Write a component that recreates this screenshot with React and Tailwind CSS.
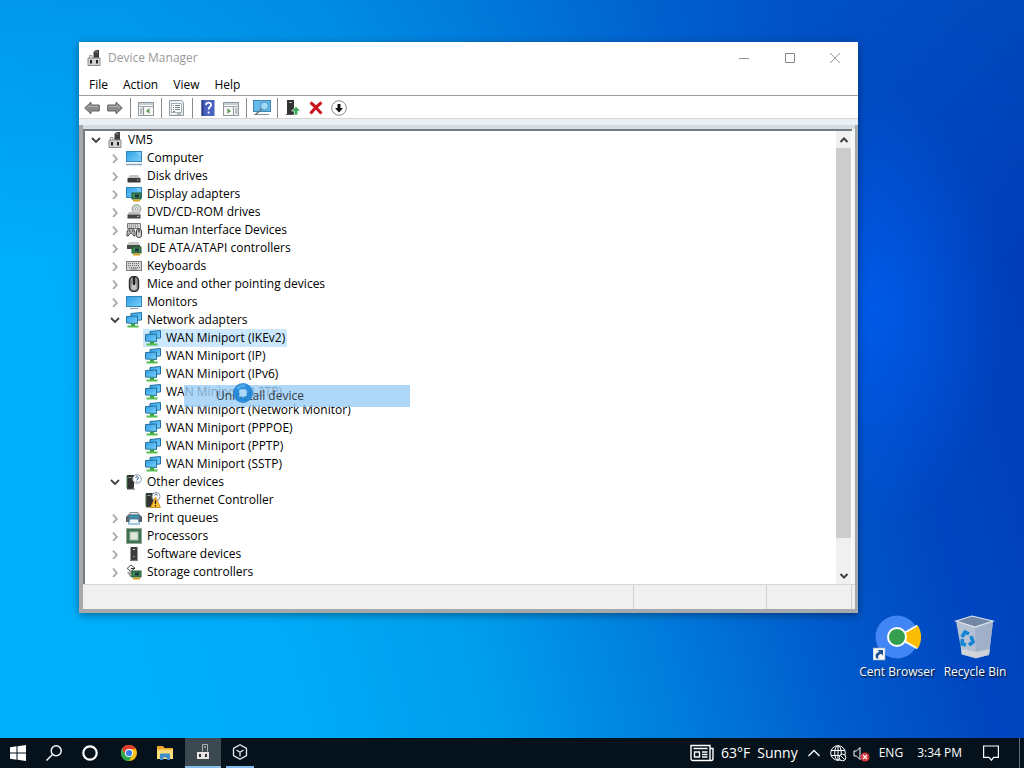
import React, { useState } from 'react';

/* ---------- small 16px device icons ---------- */

const Svg = ({ children, className = 'size-4', box = '0 0 16 16' }) => (
    <svg viewBox={box} className={`${className} shrink-0`} fill="none" aria-hidden="true">
        {children}
    </svg>
);

const PcIcon = ({ className }) => (
    <Svg className={className}>
        <path d="M9 .5l4-1V8H7.500V2z" fill="#3d3d3d" />
        <path d="M9 2h3" stroke="#8a8a8a" />
        <path d="M6 8V5.500H3.500V8" stroke="#999" />
        <path d="M2 8h12v7.500H2z" fill="#d2d2d2" stroke="#8c8c8c" />
        <rect x="4" y="10" width="2" height="3.500" fill="#222" />
        <rect x="10" y="10" width="2" height="3.500" fill="#222" />
    </Svg>
);

const Screen = () => (
    <>
        <rect x=".5" y="1.500" width="15" height="10" fill="url(#screen)" stroke="#3187bb" />
        <path d="M9 2h6v5z" fill="#8fd3fb" opacity=".6" />
    </>
);

const ComputerIcon = () => (
    <Svg>
        <Screen />
        <path d="M0 14.500h16" stroke="#8aa4bb" strokeWidth="1.500" />
    </Svg>
);

const MonitorIcon = () => (
    <Svg>
        <rect x=".5" y="2.500" width="15" height="10" fill="url(#screen)" stroke="#3187bb" />
        <path d="M4 14.500h8" stroke="#8a9cab" />
    </Svg>
);

const DiskIcon = () => (
    <Svg>
        <path d="M4 7h8l2 3H2z" fill="#c4c4c4" />
        <rect x="1.500" y="10" width="13" height="4.500" fill="#3a3a3a" />
        <rect x="11" y="11.500" width="1.500" height="1" fill="#8edb8e" />
    </Svg>
);

const Card = () => (
    <>
        <rect x="6" y="7" width="9" height="6" fill="#3d8a50" stroke="#1d5a30" />
        <rect x="9" y="8.500" width="4" height="3" fill="#223344" />
        <path d="M7 14.500h7" stroke="#d9a520" strokeWidth="2" />
    </>
);

const DisplayIcon = () => (
    <Svg>
        <Screen />
        <Card />
    </Svg>
);

const DvdIcon = () => (
    <Svg>
        <circle cx="10.500" cy="5" r="4.400" fill="#d3dad5" stroke="#8f9791" />
        <circle cx="10.500" cy="5" r="1.300" fill="#fff" stroke="#8f9791" strokeWidth=".7" />
        <path d="M3 8h10l1.500 2.500h-13z" fill="#bcbcbc" />
        <rect x="1.500" y="10.500" width="13" height="4" fill="#454545" />
        <rect x="11" y="12" width="2" height="1" fill="#aaa" />
    </Svg>
);

const HidIcon = () => (
    <Svg>
        <path d="M1.500 1.500h13v5h-13z" fill="#d8d8d8" stroke="#777" />
        <path d="M3 3h10M3 5h10" stroke="#666" strokeDasharray="1 1" />
        <path d="M1 14c-.5-6 1.500-7.500 4-7.500s4.500 1 4 7.500c-2 1-2-3-4-3s-2 4-4 3z" fill="#b5b5b5" stroke="#4c4c4c" />
        <path d="M3 9h1.500M6 9h1.500" stroke="#333" />
        <rect x="10.500" y="7" width="5" height="8.500" rx="2" fill="#ccc" stroke="#444" />
        <path d="M13 7.500v3" stroke="#333" strokeWidth="1.300" />
    </Svg>
);

const IdeIcon = () => (
    <Svg>
        <path d="M3 2h9l2 3H1z" fill="#c8c8c8" />
        <rect x="1" y="5" width="13" height="4" fill="#4b4b4b" />
        <Card />
    </Svg>
);

const KeyboardIcon = () => (
    <Svg>
        <rect x=".5" y="3.500" width="15" height="9" fill="#d6d6d6" stroke="#7a7a7a" />
        <path d="M2 5.500h12M2 7.500h12" stroke="#6c6c6c" strokeDasharray="1 1" />
        <path d="M2 9.500h12" stroke="#6c6c6c" strokeDasharray="1 1" strokeDashoffset="1" />
        <path d="M4.500 11h7" stroke="#777" />
    </Svg>
);

const MouseIcon = () => (
    <Svg>
        <rect x="3.500" y=".5" width="9" height="15" rx="4" fill="#8d8d8d" stroke="#2e2e2e" strokeWidth="1.400" />
        <path d="M5.500 8v3q0 3 2.500 3t2.500-3V8z" fill="#c4c4c4" />
        <path d="M8 1v8" stroke="#222" strokeWidth="2" />
    </Svg>
);

const NetworkIcon = () => (
    <Svg>
        <path d="M5 1.500l10.500-1v7.500l-10.500.5z" fill="url(#screen)" stroke="#23719f" />
        <path d="M.5 4.500l11-.5v7.500l-11-.5z" fill="url(#screen)" stroke="#23719f" />
        <path d="M7 11.500v3" stroke="#35a048" strokeWidth="4" />
        <path d="M1.500 14.500h11" stroke="#56bd4f" strokeWidth="2" />
    </Svg>
);

const Tower = () => (
    <>
        <path d="M1 1h7v12l-1 2H1z" fill="#333" />
        <path d="M2.500 3.500h3" stroke="#8f9f8f" />
        <path d="M1 15h8" stroke="#555" />
        <path d="M1 2v12" stroke="#477a4c" />
    </>
);

const OtherIcon = () => (
    <Svg>
        <Tower />
        <circle cx="11" cy="5" r="4.300" fill="#fff" stroke="#8997a4" />
        <path d="M9.700 4c0-2 2.800-1.800 2.600 0-.1 1-1.300 1-1.300 2.200M11 7v.9" stroke="#2b5c94" />
    </Svg>
);

const WarnIcon = () => (
    <Svg>
        <Tower />
        <circle cx="11" cy="4.500" r="4" fill="#fff" stroke="#8997a4" />
        <path d="M9.800 3.500c0-1.800 2.500-1.600 2.400 0" stroke="#2b5c94" />
        <path d="M10.500 5l5 10.500h-10z" fill="#fbc02d" stroke="#c98012" strokeWidth=".8" />
        <path d="M10.500 8.200v3.800M10.500 13v1.500" stroke="#222" strokeWidth="1.300" />
    </Svg>
);

const PrinterIcon = () => (
    <Svg>
        <path d="M4 2.500h8l1 3H3z" fill="#dfe6ea" stroke="#7f8f98" />
        <path d="M.5 7l2-2h11l2 2v4.500H.5z" fill="#5b6a73" stroke="#46535b" />
        <path d="M3 5.500h10v2H3z" fill="#2f9fc0" />
        <path d="M4 9h8l1.500 5h-11z" fill="#f4f8fb" stroke="#5594c0" />
    </Svg>
);

const CpuIcon = () => (
    <Svg>
        <rect x="1" y="1" width="14" height="14" fill="#3f7350" />
        <rect x=".5" y=".5" width="15" height="15" stroke="#27543a" strokeDasharray="1 1" />
        <rect x="4" y="4" width="8" height="8" fill="#dfeadf" stroke="#9fc0a4" />
    </Svg>
);

const SoftwareIcon = () => (
    <Svg>
        <path d="M4.500 1h7v13h-7z" fill="#3c3c3c" />
        <path d="M7 3.500h2" stroke="#ddd" />
        <path d="M7 10.500h2" stroke="#999" />
        <path d="M4 14.500h8" stroke="#777" />
    </Svg>
);

const StorageIcon = () => (
    <Svg>
        <path d="M5 1l4 3-4 3.500L1 4.500z" fill="#eee" stroke="#555" />
        <path d="M1 8l3 5h4V7z" fill="#a5a5a5" />
        <path d="M5 4.500h4" stroke="#333" />
        <Card />
    </Svg>
);

/* ---------- toolbar icons ---------- */

const ArrowIcon = ({ flip }) => (
    <svg viewBox="0 0 16 14" className={flip ? 'h-[14px] w-4 -scale-x-100' : 'h-[14px] w-4'} aria-hidden="true">
        <path d="M.7 7L7 1v3h8.300v6H7v3z" fill="#8b8b8b" stroke="#666" />
        <path d="M3 7l3-2.700V5.500h8" fill="none" stroke="#b4b4b4" />
    </svg>
);

const PaneIcon = ({ right }) => (
    <Svg>
        <rect x=".5" y="2.500" width="15" height="13" fill="#f6f7f5" stroke="#8c969c" />
        <path d="M1 4h14M1 6.500h14" stroke="#9ca7ae" />
        <path d={right ? 'M10.500 7v9' : 'M5.500 7v9'} stroke="#8c969c" />
        <path d={right ? 'M12 9h2.500M12 11h2.500M12 13h2.500' : 'M2 9h2.500M2 11h2.500M2 13h2.500'} stroke="#77858f" />
        <path d={right ? 'M4.500 8.200l3.500 2.800-3.500 2.800z' : 'M11.500 8.200L8 11l3.500 2.800z'} fill="#5b9a50" />
    </Svg>
);

const PropsIcon = () => (
    <Svg>
        <path d="M.5.5h12l2 2v13H.5z" fill="#eef1f2" stroke="#8f989e" />
        <rect x="2.500" y="3.500" width="10" height="9" fill="#fff" stroke="#a9b2b8" />
        <path d="M4 5.500h1M6 5.500h5M4 7.500h1M6 7.500h5M4 9.500h1M6 9.500h5M4 11.500h2M8 14h4" stroke="#71808a" />
    </Svg>
);

const HelpIcon = () => (
    <Svg>
        <rect x="1.500" y="0" width="13" height="16" fill="#4a61bd" />
        <path d="M2.500 0v16" stroke="#2b3c8c" strokeWidth="2" />
        <path d="M6 5c0-3.500 5.500-3 5 0-.3 2-2.400 2-2.400 4.500M8.600 11.500v2" stroke="#fff" strokeWidth="1.800" />
    </Svg>
);

const ScanIcon = () => (
    <svg viewBox="0 0 18 16" className="h-4 w-[18px]" fill="none" aria-hidden="true">
        <rect x=".5" y=".5" width="17" height="11" fill="#63b9e8" stroke="#3a85b5" />
        <path d="M1 14.500h15" stroke="#8395a0" />
        <circle cx="11.500" cy="6" r="4" fill="#9fd8f5" stroke="#4b95bf" />
        <path d="M8.500 9l-6 5.500" stroke="#60747f" strokeWidth="1.600" />
    </svg>
);

const UpdateIcon = () => (
    <Svg>
        <path d="M2 0h7v14H2z" fill="#333" />
        <path d="M4 2.500h3" stroke="#b5b5b5" />
        <path d="M1 14.500h10" stroke="#555" />
        <path d="M11 6.500l4.500 4.500h-2.800v4H9.300v-4H6.500z" fill="#3aa655" stroke="#fff" strokeWidth=".6" />
    </Svg>
);

const DeleteIcon = () => (
    <Svg>
        <path d="M2.500 2.500c4 3 7 7 11 11M13.500 2.500c-4 3-8 7-11 11" stroke="#c8141e" strokeWidth="3" />
    </Svg>
);

const DisableIcon = () => (
    <Svg>
        <circle cx="8" cy="8" r="7.300" fill="#fff" stroke="#888" />
        <path d="M6.500 4h3v4H12l-4 4.500L4 8h2.500z" fill="#111" />
    </Svg>
);

const Separator = () => <span className="mr-[3px] ml-1 h-5 w-px bg-[#8c8c8c]" />;

const Chevron = ({ open }) =>
    open ? (
        <svg viewBox="0 0 10 10" className="size-[10px]" fill="none" aria-hidden="true">
            <path d="M1 3l4 4 4-4" stroke="#404040" strokeWidth="1.800" />
        </svg>
    ) : (
        <svg viewBox="0 0 10 10" className="size-[10px]" fill="none" aria-hidden="true">
            <path d="M3 1.500L6.800 6 3 10" stroke="#a6a6a6" strokeWidth="1.800" />
        </svg>
    );

/* ---------- data ---------- */

const miniports = ['IKEv2', 'IP', 'IPv6', 'L2TP', 'Network Monitor', 'PPPOE', 'PPTP', 'SSTP'];

const categories = [
    { name: 'Computer', icon: ComputerIcon },
    { name: 'Disk drives', icon: DiskIcon },
    { name: 'Display adapters', icon: DisplayIcon },
    { name: 'DVD/CD-ROM drives', icon: DvdIcon },
    { name: 'Human Interface Devices', icon: HidIcon },
    { name: 'IDE ATA/ATAPI controllers', icon: IdeIcon },
    { name: 'Keyboards', icon: KeyboardIcon },
    { name: 'Mice and other pointing devices', icon: MouseIcon },
    { name: 'Monitors', icon: MonitorIcon },
    {
        name: 'Network adapters',
        icon: NetworkIcon,
        children: miniports.map((m) => ({ name: `WAN Miniport (${m})`, icon: NetworkIcon })),
    },
    { name: 'Other devices', icon: OtherIcon, children: [{ name: 'Ethernet Controller', icon: WarnIcon }] },
    { name: 'Print queues', icon: PrinterIcon },
    { name: 'Processors', icon: CpuIcon },
    { name: 'Software devices', icon: SoftwareIcon },
    { name: 'Storage controllers', icon: StorageIcon },
];

const TreeRow = ({ item, open, onToggle, selected, onSelect }) => {
    const Icon = item.icon;
    return (
        <div className="flex h-[18px] items-center">
            {onToggle ? (
                <button onClick={onToggle} aria-label={`Toggle ${item.name}`} className="flex w-[19px] justify-center">
                    <Chevron open={open} />
                </button>
            ) : (
                <span className="w-[19px]" />
            )}
            <button
                onClick={onSelect}
                className={`flex h-[18px] items-center gap-[5px] px-[2px] whitespace-nowrap ${selected ? 'bg-[#cce8ff]' : ''}`}
            >
                <Icon />
                <span>{item.name}</span>
            </button>
        </div>
    );
};

const DeviceTree = () => {
    const [open, setOpen] = useState({ root: true, 'Network adapters': true, 'Other devices': true });
    const [selected, setSelected] = useState('WAN Miniport (IKEv2)');
    const toggle = (name) => setOpen({ ...open, [name]: !open[name] });

    return (
        <div className="min-w-0 flex-1 overflow-hidden pl-px">
            <TreeRow
                item={{ name: 'VM5', icon: PcIcon }}
                open={open.root}
                onToggle={() => toggle('root')}
                selected={selected === 'VM5'}
                onSelect={() => setSelected('VM5')}
            />
            {open.root && (
                <ul className="pl-[19px]">
                    {categories.map((cat) => (
                        <li key={cat.name}>
                            <TreeRow
                                item={cat}
                                open={open[cat.name]}
                                onToggle={() => toggle(cat.name)}
                                selected={selected === cat.name}
                                onSelect={() => setSelected(cat.name)}
                            />
                            {cat.children && open[cat.name] && (
                                <ul className="pl-[19px]">
                                    {cat.children.map((dev) => (
                                        <li key={dev.name}>
                                            <TreeRow
                                                item={dev}
                                                selected={selected === dev.name}
                                                onSelect={() => setSelected(dev.name)}
                                            />
                                        </li>
                                    ))}
                                </ul>
                            )}
                        </li>
                    ))}
                </ul>
            )}
        </div>
    );
};

const ScrollBar = () => (
    <div className="mr-px flex w-[15px] flex-col bg-[#f0f0f0]">
        <button aria-label="Scroll up" className="flex h-[17px] items-center justify-center">
            <svg viewBox="0 0 10 10" className="size-[10px]" fill="none" aria-hidden="true">
                <path d="M1.500 7L5 3.500 8.500 7" stroke="#404040" strokeWidth="2" />
            </svg>
        </button>
        <div className="flex-1">
            <div className="h-[93%] bg-[#cdcdcd]" />
        </div>
        <button aria-label="Scroll down" className="flex h-[17px] items-center justify-center">
            <svg viewBox="0 0 10 10" className="size-[10px]" fill="none" aria-hidden="true">
                <path d="M1.500 3L5 6.500 8.500 3" stroke="#404040" strokeWidth="2" />
            </svg>
        </button>
    </div>
);

const ToolButton = ({ label, children }) => (
    <button aria-label={label} title={label} className="flex h-5 w-[23px] items-center justify-center">
        {children}
    </button>
);

const DeviceManager = () => (
    <section className="absolute top-[42px] right-[166px] bottom-[125px] left-[79px] flex flex-col bg-white shadow-[0_2px_8px_rgba(0,0,0,0.4)]">
        <header className="flex h-8 items-center pl-[7px] text-[#999]">
            <PcIcon />
            <h1 className="ml-[6px] flex-1">Device Manager</h1>
            <button aria-label="Minimize" className="flex h-8 w-[46px] items-center justify-center">
                <svg viewBox="0 0 10 10" className="size-[10px]" aria-hidden="true">
                    <path d="M0 5.500h10" stroke="#999" />
                </svg>
            </button>
            <button aria-label="Maximize" className="flex h-8 w-[45px] items-center justify-center">
                <svg viewBox="0 0 10 10" className="size-[10px]" fill="none" aria-hidden="true">
                    <path d="M.5.5h9v9h-9z" stroke="#888" />
                </svg>
            </button>
            <button aria-label="Close" className="flex h-8 w-[46px] items-center justify-center">
                <svg viewBox="0 0 10 10" className="size-[10px]" aria-hidden="true">
                    <path d="M0 0l10 10M10 0L0 10" stroke="#999" />
                </svg>
            </button>
        </header>

        <nav className="flex h-[22px] items-center gap-[15px] border-b border-[#a0a0a0] pl-[10px]">
            <button>File</button>
            <button>Action</button>
            <button>View</button>
            <button>Help</button>
        </nav>

        <div className="flex h-[23px] items-center border-b border-[#d5d5d5] pt-[2px] pl-px">
            <ToolButton label="Back"><ArrowIcon /></ToolButton>
            <ToolButton label="Forward"><ArrowIcon flip /></ToolButton>
            <Separator />
            <ToolButton label="Show/Hide Console Tree"><PaneIcon /></ToolButton>
            <Separator />
            <ToolButton label="Properties"><PropsIcon /></ToolButton>
            <Separator />
            <ToolButton label="Help"><HelpIcon /></ToolButton>
            <ToolButton label="Show/Hide Action Pane"><PaneIcon right /></ToolButton>
            <Separator />
            <ToolButton label="Scan for hardware changes"><ScanIcon /></ToolButton>
            <Separator />
            <ToolButton label="Update driver"><UpdateIcon /></ToolButton>
            <ToolButton label="Uninstall device"><DeleteIcon /></ToolButton>
            <ToolButton label="Disable device"><DisableIcon /></ToolButton>
        </div>

        <div className="h-[6px] bg-[#e9eff4]" />
        <div className="flex min-h-0 flex-1 flex-col border-r-[3px] border-b-4 border-l-4 border-[#a6a9ab] bg-[#f0f0f0]">
            <div className="h-1 bg-[#d6dde2]" />
            <div className="flex min-h-0 flex-1 bg-[#f4f7f6] pr-[3px]">
                <div className="flex min-h-0 flex-1 border-t-2 border-l-2 border-t-[#777b7e] border-l-[#777b7e] bg-white">
                    <DeviceTree />
                    <ScrollBar />
                </div>
            </div>
            <div className="flex h-[25px] border-t border-[#d7d7d7] pr-[3px]">
                <span className="flex-1" />
                <span className="w-[133px] border-l border-[#cfcfcf]" />
                <span className="w-[86px] border-x border-[#cfcfcf]" />
            </div>
        </div>
    </section>
);

/* menu caught while it fades out, with the busy pointer over it */
const FadingMenu = () => (
    <>
        <button className="absolute top-[385px] left-[184px] h-[22px] w-[226px] bg-[#9bcdf5]/80 pl-8 text-left text-[#333f4a]">
            Uninstall device
        </button>
        <span className="absolute top-[383px] left-[233px]">
            <svg viewBox="0 0 20 20" className="size-5" aria-hidden="true">
                <circle cx="10" cy="10" r="7" fill="none" stroke="#2187d8" strokeWidth="6" opacity=".92" />
                <circle cx="10" cy="10" r="7" fill="none" stroke="#4fa8e6" strokeWidth="3" strokeDasharray="9 35" strokeDashoffset="-26" />
                <path d="M6.500 6.500h6l1 1v5l-1 1h-6z" fill="#a9d8f8" />
            </svg>
        </span>
    </>
);

const CentIcon = () => (
    <svg viewBox="0 0 48 48" className="size-12" aria-hidden="true">
        <circle cx="24" cy="23" r="21.500" fill="#4285f4" />
        <path d="M24 23L43.500 12a22 22 0 0 1 0 22z" fill="#fbbc05" stroke="#fff" strokeWidth="2" />
        <path d="M43.800 12.500a22 22 0 0 1 0 21" fill="none" stroke="#fbbc05" strokeWidth="3" />
        <circle cx="24" cy="23" r="9" fill="#34a04f" stroke="#fff" strokeWidth="2" />
        <rect x="0" y="34" width="12" height="12" fill="#f4f7fa" stroke="#9cabbb" strokeWidth=".6" />
        <path d="M3.500 44.500c-2-3-.5-6 3-6.500L4.500 36H10v5.500L8.200 39.800C5.500 40.500 4.500 42 5.500 44.500z" fill="#1d4f91" />
    </svg>
);

const BinIcon = () => (
    <svg viewBox="0 0 48 48" className="size-12" aria-hidden="true">
        <path d="M5 7l19 6 18-6-4 34-13 3-14-4z" fill="#b4c1d2" />
        <path d="M24 13l18-6-4 34-13 3z" fill="#9fb0c8" />
        <path d="M5 7L21 2l21 5-18 6z" fill="#7288a6" stroke="#dfe6ee" strokeWidth="1.200" />
        <path d="M10 35l15 3 13.700-3-.7 5.500L25 44.500l-14.500-4z" fill="#d9dadb" opacity=".8" />
        <g fill="none" stroke="#1484d6" strokeWidth="3.600">
            <path d="M11 23l3-5 4 2" />
            <path d="M20 22l2 6-4 3" />
            <path d="M15 31l-4-1 .5-5" />
        </g>
    </svg>
);

const Shortcut = ({ label, children }) => (
    <button className="flex w-[78px] flex-col items-center gap-[2px] whitespace-nowrap text-white [text-shadow:1px_1px_2px_#000]">
        {children}
        <span>{label}</span>
    </button>
);

const TaskButton = ({ label, className = '', children }) => (
    <button aria-label={label} className={`flex h-full w-9 items-center justify-center ${className}`}>
        {children}
    </button>
);

const Taskbar = () => (
    <footer className="flex h-[30px] shrink-0 items-center bg-[#05121c] text-white">
        <TaskButton label="Start">
            <svg viewBox="0 0 16 16" className="size-4" fill="#fff" aria-hidden="true">
                <path d="M0 2.200l6.500-.9v6.200H0zM7.500 1.200L16 0v7.500H7.500zM0 8.500h6.500v6.200L0 13.800zM7.500 8.500H16V16l-8.500-1.200z" />
            </svg>
        </TaskButton>
        <TaskButton label="Search">
            <svg viewBox="0 0 16 16" className="size-4" fill="none" stroke="#fff" aria-hidden="true">
                <circle cx="10.200" cy="5.800" r="5" strokeWidth="1.400" />
                <path d="M6.500 9.500L.5 15.500" strokeWidth="1.400" />
            </svg>
        </TaskButton>
        <TaskButton label="Cortana">
            <svg viewBox="0 0 16 16" className="size-4" fill="none" aria-hidden="true">
                <circle cx="8" cy="8" r="6.700" stroke="#fff" strokeWidth="2.200" />
            </svg>
        </TaskButton>
        <TaskButton label="Chrome" className="ml-[3px]">
            <svg viewBox="0 0 16 16" className="size-4" aria-hidden="true">
                <circle cx="8" cy="8" r="8" fill="#fbc116" />
                <path d="M8 4h6.930A8 8 0 0 0 1.070 4L4.500 10z" fill="#e33b2e" />
                <path d="M1.070 4A8 8 0 0 0 8 16l3.460-6L4.540 10z" fill="#2da94f" />
                <circle cx="8" cy="8" r="4" fill="#fff" />
                <circle cx="8" cy="8" r="3.100" fill="#3b7ded" />
            </svg>
        </TaskButton>
        <TaskButton label="File Explorer">
            <svg viewBox="0 0 16 16" className="size-4" aria-hidden="true">
                <path d="M0 1h6l1.500 2H16v11H0z" fill="#eda72b" />
                <path d="M0 4.500h16V14H0z" fill="#fbdc7b" />
                <path d="M3 15V9.500q0-1 1-1h8q1 0 1 1V15h-3v-2.500H6V15z" fill="#3f8fce" />
            </svg>
        </TaskButton>
        <TaskButton label="Device Manager" className="ml-[2px] border-b-2 border-[#86bdea] bg-[#3d4950]">
            <Svg>
                <path d="M7.500 7.500v-7h5v7" stroke="#a8b0b4" />
                <rect x="9.500" y="2" width="1" height="2" fill="#ddd" />
                <rect x="2" y="8" width="12" height="7" fill="#e4e4e4" />
                <rect x="4" y="10" width="2" height="3" fill="#333" />
                <rect x="10" y="10" width="2" height="3" fill="#333" />
            </Svg>
        </TaskButton>
        <button aria-label="VirtualBox" className="ml-[5px] flex h-full w-7 items-center justify-center border-b-2 border-[#86bdea]">
            <svg viewBox="0 0 16 16" className="size-4" fill="none" stroke="#e8edf0" strokeWidth="1.300" strokeLinejoin="round" aria-hidden="true">
                <path d="M8 .8l6.500 3.600v7.200L8 15.200l-6.500-3.600V4.400z" />
                <path d="M4.500 6L8 8.200 11.500 6M8 8.200v4.300" />
            </svg>
        </button>

        <div className="ml-auto flex h-full items-center">
            <button className="flex items-center gap-[7px] text-sm">
                <svg viewBox="0 0 24 18" className="h-[18px] w-6" fill="none" stroke="#fff" strokeWidth="1.400" aria-hidden="true">
                    <path d="M1 1.500h19v15H3q-2 0-2-2zM20 4.500h3v10q0 2-2 2h-3" />
                    <path d="M3.500 4.500h14M12 8h5.500M12 10.500h5.500M12 13h5.500" />
                    <path d="M4.500 8h5v5h-5z" />
                </svg>
                <span>63°F</span>
                <span>Sunny</span>
            </button>
            <button aria-label="Show hidden icons" className="ml-[10px]">
                <svg viewBox="0 0 12 8" className="h-2 w-3" fill="none" stroke="#fff" strokeWidth="1.300" aria-hidden="true">
                    <path d="M.5 7L6 1.500 11.500 7" />
                </svg>
            </button>
            <button aria-label="Network" className="ml-[10px]">
                <svg viewBox="0 0 17 17" className="size-[17px]" fill="none" stroke="#fff" aria-hidden="true">
                    <circle cx="8" cy="8" r="7.300" />
                    <ellipse cx="8" cy="8" rx="3.300" ry="7.300" />
                    <path d="M1 5.500h14M1 10.500h9M8 1v14" />
                    <circle cx="12.500" cy="12.500" r="3.300" fill="#05121c" />
                    <path d="M10.300 10.300l4.400 4.400" />
                </svg>
            </button>
            <button aria-label="Volume" className="ml-[6px]">
                <svg viewBox="0 0 17 17" className="size-[17px]" fill="none" aria-hidden="true">
                    <path d="M1 6h2.500L7 2.500v12L3.500 11H1z" stroke="#fff" />
                    <circle cx="12" cy="12" r="4.500" fill="#d8343a" />
                    <path d="M10 10l4 4M14 10l-4 4" stroke="#fff" strokeWidth="1.200" />
                </svg>
            </button>
            <button className="ml-[9px]">ENG</button>
            <button className="ml-[14px]">3:34 PM</button>
            <button aria-label="Notifications" className="ml-[21px]">
                <svg viewBox="0 0 16 16" className="size-4" fill="none" stroke="#fff" strokeWidth="1.200" aria-hidden="true">
                    <path d="M.6 1h14.800v11.400h-4.800L8.500 15.200 6 12.400H.6z" />
                </svg>
            </button>
            <span className="mr-1 ml-5 h-full w-px bg-[#5d6b74]" />
        </div>
    </footer>
);

export default function App() {
    return (
        <div className="flex h-screen flex-col overflow-hidden font-['Open_Sans','Noto_Sans',sans-serif] text-xs text-black">
            {/* shared screen gradient */}
            <svg className="absolute size-0" aria-hidden="true">
                <defs>
                    <linearGradient id="screen" x1="0" y1="0" x2="1" y2="1">
                        <stop offset="0" stopColor="#2f9fe6" />
                        <stop offset="1" stopColor="#7cd0fb" />
                    </linearGradient>
                </defs>
            </svg>
            <main className="relative flex min-h-0 flex-1 items-end justify-end bg-[radial-gradient(13%_30%_at_85%_42%,#005ae8_0%,#005ae800_100%),linear-gradient(180deg,#0068d050_0%,#0068d000_35%),linear-gradient(76deg,#00b0fc_0%,#00acf8_25%,#009cec_42%,#007cdc_57%,#005ccc_70%,#0046c0_82%,#003ab4_100%)]">
                <DeviceManager />
                <FadingMenu />
                <div className="mr-[10px] mb-[58px] flex">
                    <Shortcut label="Cent Browser"><CentIcon /></Shortcut>
                    <Shortcut label="Recycle Bin"><BinIcon /></Shortcut>
                </div>
            </main>
            <Taskbar />
        </div>
    );
}
